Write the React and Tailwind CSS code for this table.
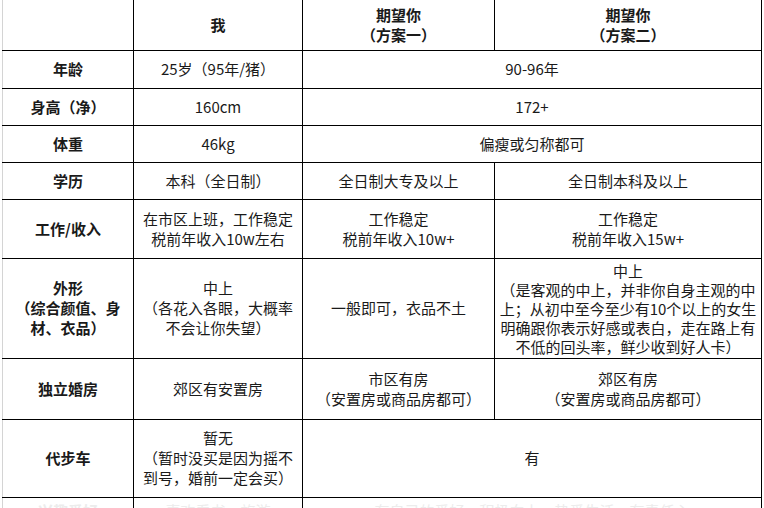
import React from "react";

const B = "border border-black";
const td = `${B} text-center align-middle p-0 whitespace-nowrap`;
const th = `${B} text-center align-middle p-0 font-bold whitespace-nowrap`;
const first = `border border-black border-l-[#d4d4d4] text-center align-middle p-0 font-bold whitespace-nowrap`;

export default function App() {
  return (
    <div
      className="w-[764px] h-[508px] overflow-hidden bg-white text-[#1a1a1a] text-[15px] leading-[20px]"
      style={{ fontFamily: '"Noto Sans CJK SC", "Noto Sans", sans-serif' }}
    >
      <table className="ml-[2px] w-[759px] table-fixed border-collapse">
        <colgroup>
          <col className="w-[131px]" />
          <col className="w-[169px]" />
          <col className="w-[192px]" />
          <col className="w-[267px]" />
        </colgroup>
        <tbody>
          <tr className="h-[50px]">
            <td className={`${first} border-t-0`}></td>
            <td className={`${th} border-t-0`}>我</td>
            <td className={`${th} border-t-0`}>
              期望你
              <br />
              （方案一）
            </td>
            <td className={`${th} border-t-0`}>
              期望你
              <br />
              （方案二）
            </td>
          </tr>
          <tr className="h-[38px]">
            <td className={first}>年龄</td>
            <td className={td}>25岁（95年/猪）</td>
            <td className={td} colSpan={2}>90-96年</td>
          </tr>
          <tr className="h-[37px]">
            <td className={first}>身高（净）</td>
            <td className={td}>160cm</td>
            <td className={td} colSpan={2}>172+</td>
          </tr>
          <tr className="h-[37px]">
            <td className={first}>体重</td>
            <td className={td}>46kg</td>
            <td className={td} colSpan={2}>偏瘦或匀称都可</td>
          </tr>
          <tr className="h-[37px]">
            <td className={first}>学历</td>
            <td className={td}>本科（全日制）</td>
            <td className={td}>全日制大专及以上</td>
            <td className={td}>全日制本科及以上</td>
          </tr>
          <tr className="h-[59px]">
            <td className={first}>工作/收入</td>
            <td className={td}>
              在市区上班，工作稳定
              <br />
              税前年收入10w左右
            </td>
            <td className={td}>
              工作稳定
              <br />
              税前年收入10w+
            </td>
            <td className={td}>
              工作稳定
              <br />
              税前年收入15w+
            </td>
          </tr>
          <tr className="h-[100px]">
            <td className={first}>
              外形
              <br />
              （综合颜值、身
              <br />
              材、衣品）
            </td>
            <td className={td}>
              中上
              <br />
              （各花入各眼，大概率
              <br />
              不会让你失望）
            </td>
            <td className={td}>一般即可，衣品不土</td>
            <td className={`${td} leading-[19px]`}>
              中上
              <br />
              （是客观的中上，并非你自身主观的中
              <br />
              上；从初中至今至少有10个以上的女生
              <br />
              明确跟你表示好感或表白，走在路上有
              <br />
              不低的回头率，鲜少收到好人卡）
            </td>
          </tr>
          <tr className="h-[61px]">
            <td className={first}>独立婚房</td>
            <td className={td}>郊区有安置房</td>
            <td className={td}>
              市区有房
              <br />
              （安置房或商品房都可）
            </td>
            <td className={td}>
              郊区有房
              <br />
              （安置房或商品房都可）
            </td>
          </tr>
          <tr className="h-[78px]">
            <td className={first}>代步车</td>
            <td className={td}>
              暂无
              <br />
              （暂时没买是因为摇不
              <br />
              到号，婚前一定会买）
            </td>
            <td className={td} colSpan={2}>有</td>
          </tr>
          <tr className="h-[40px]">
            <td className={`${first} align-top pt-[3px] text-[#ececec]`}>兴趣爱好</td>
            <td className={`${td} align-top pt-[3px] text-[#ececec]`}>喜欢看书、旅游</td>
            <td className={`${td} align-top pt-[3px] text-[#ececec]`} colSpan={2}>
              有自己的爱好，积极向上，热爱生活，有责任心
            </td>
          </tr>
        </tbody>
      </table>
    </div>
  );
}
